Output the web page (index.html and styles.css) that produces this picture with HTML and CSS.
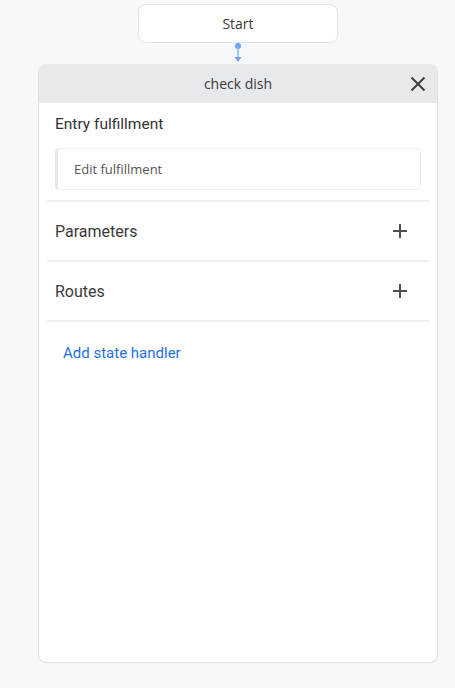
FILE: index.html
```html
<!DOCTYPE html>
<html>
<head>
<meta charset="utf-8">
<link rel="stylesheet" href="styles.css">
</head>
<body>
<div class="canvas">
  <div class="start-node">Start</div>
  <svg class="connector" width="10" height="21" viewBox="0 0 10 21">
    <circle cx="5" cy="3" r="3" fill="#6ea1f7"/>
    <line x1="5" y1="3" x2="5" y2="15" stroke="#8db5f8" stroke-width="1.5"/>
    <path d="M1.5 14 L8.5 14 L5 19 Z" fill="#6ea1f7"/>
  </svg>
  <div class="panel">
    <div class="panel-header">
      <span class="panel-title">check dish</span>
      <svg class="close-icon" width="16" height="16" viewBox="0 0 16 16">
        <path d="M1.5 1.5 L14.5 14.5 M14.5 1.5 L1.5 14.5" stroke="#3d4240" stroke-width="2" fill="none"/>
      </svg>
    </div>
    <div class="panel-body">
      <div class="section entry">
        <div class="section-title">Entry fulfillment</div>
        <div class="input-box">Edit fulfillment</div>
      </div>
      <div class="divider"></div>
      <div class="row">
        <span class="row-label">Parameters</span>
        <svg class="plus" width="16" height="16" viewBox="0 0 16 16">
          <path d="M8 1 L8 15 M1 8 L15 8" stroke="#4a524e" stroke-width="2" fill="none"/>
        </svg>
      </div>
      <div class="divider"></div>
      <div class="row">
        <span class="row-label">Routes</span>
        <svg class="plus" width="16" height="16" viewBox="0 0 16 16">
          <path d="M8 1 L8 15 M1 8 L15 8" stroke="#4a524e" stroke-width="2" fill="none"/>
        </svg>
      </div>
      <div class="divider"></div>
      <div class="add-link">Add state handler</div>
    </div>
  </div>
</div>
</body>
</html>
```
FILE: styles.css
```css
html, body {
  margin: 0;
  padding: 0;
  background: #f7f8fa;
  font-family: "Open Sans", "Noto Sans", sans-serif;
}
.canvas {
  width: 455px;
  height: 688px;
  display: flex;
  flex-direction: column;
  align-items: flex-start;
}
.start-node {
  margin: 4px 0 0 138px;
  box-sizing: border-box;
  width: 200px;
  height: 39px;
  background: #ffffff;
  border: 1px solid #e3e5e9;
  border-radius: 8px;
  display: flex;
  align-items: center;
  justify-content: center;
  font-size: 14px;
  color: #3a3a3a;
}
.connector {
  display: block;
  margin: 0 0 0 233px;
}
.panel {
  margin: 0 0 0 38px;
  box-sizing: border-box;
  width: 400px;
  height: 599px;
  background: #ffffff;
  border: 1px solid #dcdfe3;
  border-top: none;
  border-radius: 8px;
  overflow: hidden;
}
.panel-header {
  height: 39px;
  background: #e8e9ec;
  display: flex;
  align-items: center;
  justify-content: center;
  position: relative;
}
.panel-title {
  font-size: 14px;
  color: #3a3a3a;
}
.close-icon {
  position: absolute;
  right: 11px;
  top: 12px;
}
.panel-body {
  padding: 0 8px;
}
.section.entry {
  padding: 10px 0 10px 8px;
}
.section-title {
  font-family: Roboto, "Noto Sans", sans-serif;
  font-size: 15.5px;
  line-height: 22px;
  color: #333333;
  margin-bottom: 13px;
}
.input-box {
  box-sizing: border-box;
  width: 366px;
  height: 42px;
  border: 1px solid #eeeff1;
  border-left: 3px solid #e6e7ea;
  border-radius: 4px;
  display: flex;
  align-items: center;
  padding-left: 16px;
  font-size: 13px;
  color: #555555;
}
.divider {
  height: 2px;
  background: #eeeeef;
}
.row {
  height: 58px;
  display: flex;
  align-items: center;
  justify-content: space-between;
  padding: 0 21px 0 8px;
}
.row-label {
  font-family: Roboto, "Noto Sans", sans-serif;
  font-size: 16px;
  color: #3a3a3a;
}
.plus {
  display: block;
}
.add-link {
  padding: 20px 0 0 16px;
  font-family: Roboto, "Noto Sans", sans-serif;
  font-size: 15px;
  line-height: 22px;
  color: #1f6fe5;
}
```
